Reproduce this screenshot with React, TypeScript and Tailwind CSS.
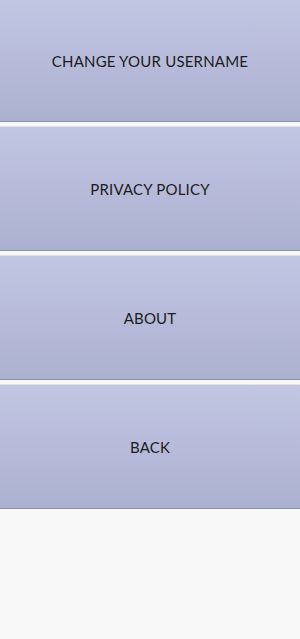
import React from "react";

const items = ["CHANGE YOUR USERNAME", "PRIVACY POLICY", "ABOUT", "BACK"];

export default function App() {
  return (
    <div className="w-[300px] h-[639px] bg-[#f8f8f8] flex flex-col gap-[5px]" style={{ fontFamily: "Lato, 'Open Sans', sans-serif" }}>
      {items.map((t, i) => (
        <button
          key={t}
          className={`${i === 0 ? "h-[122px]" : "h-[124px]"} w-full shrink-0 flex items-center justify-center pt-[2px] bg-gradient-to-b from-[#c1c6e3] to-[#adb1d0] border-b border-[#8c90a6] shadow-[0_-1px_0_#e0e0e6] text-[15px] font-normal text-[#1c1c22] tracking-[0.2px]`}
        >
          {t}
        </button>
      ))}
    </div>
  );
}
